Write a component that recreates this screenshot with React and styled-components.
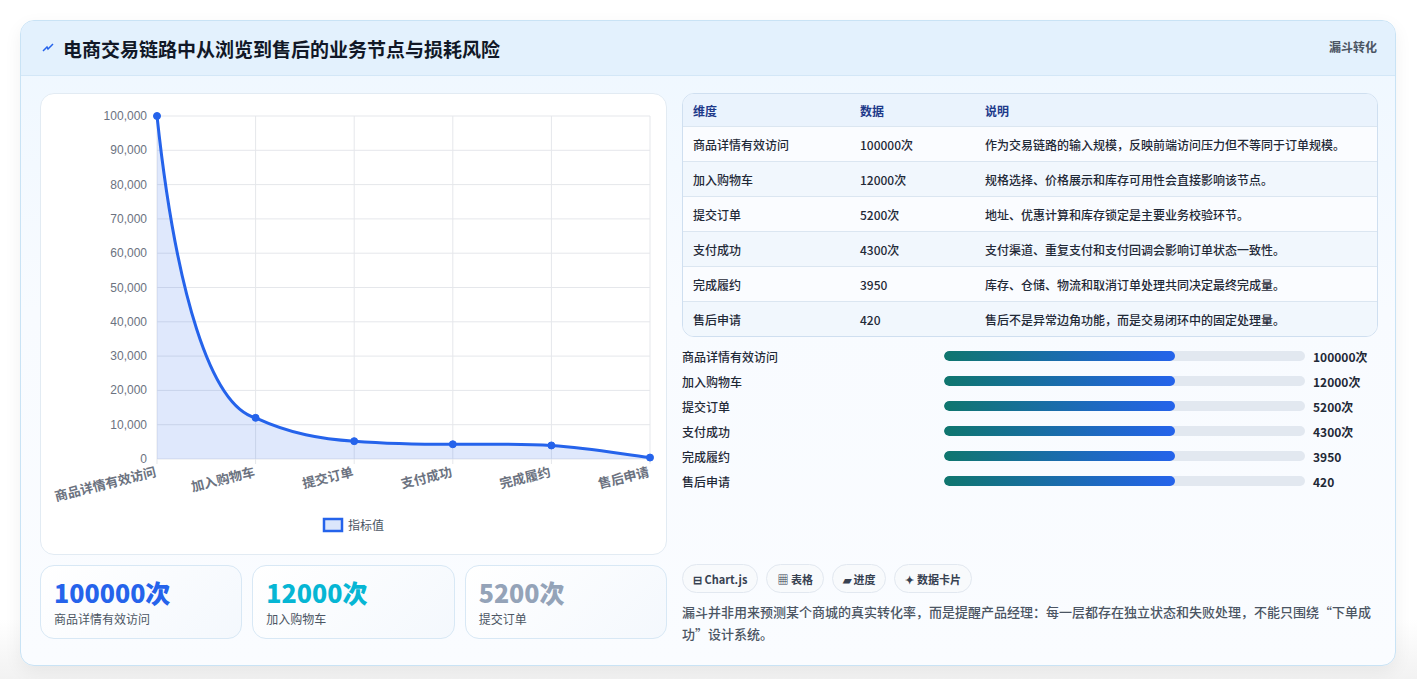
import React from "react";
import styled, { createGlobalStyle } from "styled-components";

const Global = createGlobalStyle`
  html,body{margin:0;background:#fff;font-family:"Noto Sans CJK SC","Noto Sans",sans-serif;}
  *{box-sizing:border-box;}
`;
const Page = styled.div`padding:20px 21px 22px 20px;background:linear-gradient(#fff 0%,#fff 90%,#f0f0f0 100%);`;
const Card = styled.div`
  border:1px solid #c9e3f5;border-radius:14px;overflow:hidden;
  background:linear-gradient(180deg,#eef7ff 0%,#f8fbff 45%,#fafcff 100%);
  box-shadow:0 6px 18px rgba(0,0,0,0.06);
`;
const Header = styled.div`
  height:55px;display:flex;align-items:center;justify-content:space-between;
  padding:0 18px 0 20px;background:#e3f1fd;border-bottom:1px solid #d3e7f7;
`;
const Title = styled.h1`margin:0;font-size:19px;font-weight:700;color:#111827;display:flex;align-items:center;gap:8px;`;
const Tag = styled.span`font-size:12px;font-weight:700;color:#4b5563;align-self:flex-start;margin-top:17px;`;
const Body = styled.div`display:grid;grid-template-columns:627px 696px;gap:15px;padding:17px 18px 20px 19px;`;
const Col = styled.div`display:flex;flex-direction:column;`;
const ChartBox = styled.div`height:462px;background:#fff;border:1px solid #e2ebf3;border-radius:14px;`;
const Kpis = styled.div`display:grid;grid-template-columns:repeat(3,1fr);gap:10px;margin-top:10px;`;
const Kpi = styled.div`height:74px;border:1px solid #d8e8f5;border-radius:14px;background:linear-gradient(135deg,#fff,#f4f8fd);padding:10px 13px;`;
const KpiVal = styled.div`font-size:25px;font-weight:800;line-height:32px;color:${p=>p.c};`;
const KpiLbl = styled.div`font-size:12px;color:#4b5563;margin-top:2px;`;
const Table = styled.div`border:1px solid #cfdff0;border-radius:12px;overflow:hidden;background:#f7fbff;`;
const Row = styled.div`display:grid;grid-template-columns:167px 125px 1fr;height:${p=>p.h}px;align-items:center;padding-left:10px;font-size:12px;
  color:${p=>p.head?"#1e3a8a":"#1f2937"};font-weight:${p=>p.head?600:500};
  background:${p=>p.head?"#eaf3fd":p.alt?"#f1f7fd":"#fafcff"};border-top:${p=>p.first?"none":"1px solid #dbe6f1"};`;
const Bars = styled.div`display:flex;flex-direction:column;gap:7px;margin-top:10px;`;
const BarRow = styled.div`display:grid;grid-template-columns:262px 361px 1fr;align-items:center;height:18px;font-size:12px;color:#1f2937;font-weight:500;`;
const Track = styled.div`height:10px;border-radius:5px;background:#e2e8f0;overflow:hidden;`;
const Fill = styled.div`height:100%;border-radius:5px;background:linear-gradient(90deg,#0f766e,#2563eb);`;
const BarVal = styled.span`padding-left:8px;font-weight:700;`;
const Chips = styled.div`display:flex;gap:8px;margin-top:74px;`;
const Chip = styled.span`height:29px;padding:0 10px;border:1px solid #e2e8f0;border-radius:15px;background:#f8fafc;font-size:11px;font-weight:700;color:#374151;display:flex;align-items:center;gap:3px;`;
const Note = styled.p`margin:8px 0 0;font-size:13px;line-height:22px;color:#4b5563;font-weight:500;`;

const rows=[["商品详情有效访问","100000次","作为交易链路的输入规模，反映前端访问压力但不等同于订单规模。"],["加入购物车","12000次","规格选择、价格展示和库存可用性会直接影响该节点。"],["提交订单","5200次","地址、优惠计算和库存锁定是主要业务校验环节。"],["支付成功","4300次","支付渠道、重复支付和支付回调会影响订单状态一致性。"],["完成履约","3950","库存、仓储、物流和取消订单处理共同决定最终完成量。"],["售后申请","420","售后不是异常边角功能，而是交易闭环中的固定处理量。"]];
const xs=[116,214.6,313.2,411.8,510.4,609];
const vals=[100000,12000,5200,4300,3950,420];
const ys=vals.map(v=>365-v*0.00343);
const line="M116,22 C135,200 170,312 214.6,323.8 C250,340 280,345 313.2,347.2 C350,350 380,350.3 411.8,350.3 C450,350.3 480,349.5 510.4,351.5 C550,354 580,360 609,363.6";

function Chart(){
  const ticks=[0,1,2,3,4,5,6,7,8,9,10];
  return (
    <svg width="627" height="460" style={{display:"block"}}>
      {ticks.map(t=>{const y=365-t*34.3;return <g key={t}>
        <line x1="116" x2="609" y1={y} y2={y} stroke="#e5e7eb"/>
        <text x="106" y={y+4} textAnchor="end" fontSize="12" fill="#6b7280" fontFamily="Liberation Sans">{t===0?"0":(t*10)+",000"}</text></g>})}
      {xs.map((x,i)=><line key={i} x1={x} x2={x} y1="22" y2="370" stroke="#e5e7eb"/>)}
      <path d={line+" L609,365 L116,365 Z"} fill="rgba(37,99,235,0.15)"/>
      <path d={line} fill="none" stroke="#2563eb" strokeWidth="3"/>
      {xs.map((x,i)=><circle key={i} cx={x} cy={ys[i]} r="3.5" fill="#2563eb" stroke="#2563eb"/>)}
      {["商品详情有效访问","加入购物车","提交订单","支付成功","完成履约","售后申请"].map((l,i)=>
        <text key={l} x={xs[i]} y="382" textAnchor="end" fontSize="13" fontWeight="600" fill="#6b7280" transform={`rotate(-14 ${xs[i]} 382)`}>{l}</text>)}
      <rect x="283" y="425" width="18" height="12" fill="#dbe6fb" stroke="#2563eb" strokeWidth="2.5"/>
      <text x="307" y="436" fontSize="12" fill="#4b5563">指标值</text>
    </svg>
  );
}

export default function App(){
  return (<Page><Global/>
    <Card>
      <Header>
        <Title><svg width="14" height="14" viewBox="0 0 14 14"><path d="M2 10 L6 6 L7 8 L12 3" stroke="#2563eb" strokeWidth="1.5" fill="none"/></svg>电商交易链路中从浏览到售后的业务节点与损耗风险</Title>
        <Tag>漏斗转化</Tag>
      </Header>
      <Body>
        <Col>
          <ChartBox><Chart/></ChartBox>
          <Kpis>
            <Kpi><KpiVal c="#2563eb">100000次</KpiVal><KpiLbl>商品详情有效访问</KpiLbl></Kpi>
            <Kpi><KpiVal c="#06b6d4">12000次</KpiVal><KpiLbl>加入购物车</KpiLbl></Kpi>
            <Kpi><KpiVal c="#94a3b8">5200次</KpiVal><KpiLbl>提交订单</KpiLbl></Kpi>
          </Kpis>
        </Col>
        <Col>
          <Table>
            <Row head first h={32}><span>维度</span><span>数据</span><span>说明</span></Row>
            {rows.map((r,i)=><Row key={i} h={35} alt={i%2===1}><span>{r[0]}</span><span>{r[1]}</span><span>{r[2]}</span></Row>)}
          </Table>
          <Bars>
            {rows.map((r,i)=><BarRow key={i}><span>{r[0]}</span><Track><Fill style={{width:"64%"}}/></Track><BarVal>{r[1]}</BarVal></BarRow>)}
          </Bars>
          <Chips><Chip>⊟ Chart.js</Chip><Chip>▦ 表格</Chip><Chip>▰ 进度</Chip><Chip>✦ 数据卡片</Chip></Chips>
          <Note>漏斗并非用来预测某个商城的真实转化率，而是提醒产品经理：每一层都存在独立状态和失败处理，不能只围绕“下单成功”设计系统。</Note>
        </Col>
      </Body>
    </Card>
  </Page>);
}
